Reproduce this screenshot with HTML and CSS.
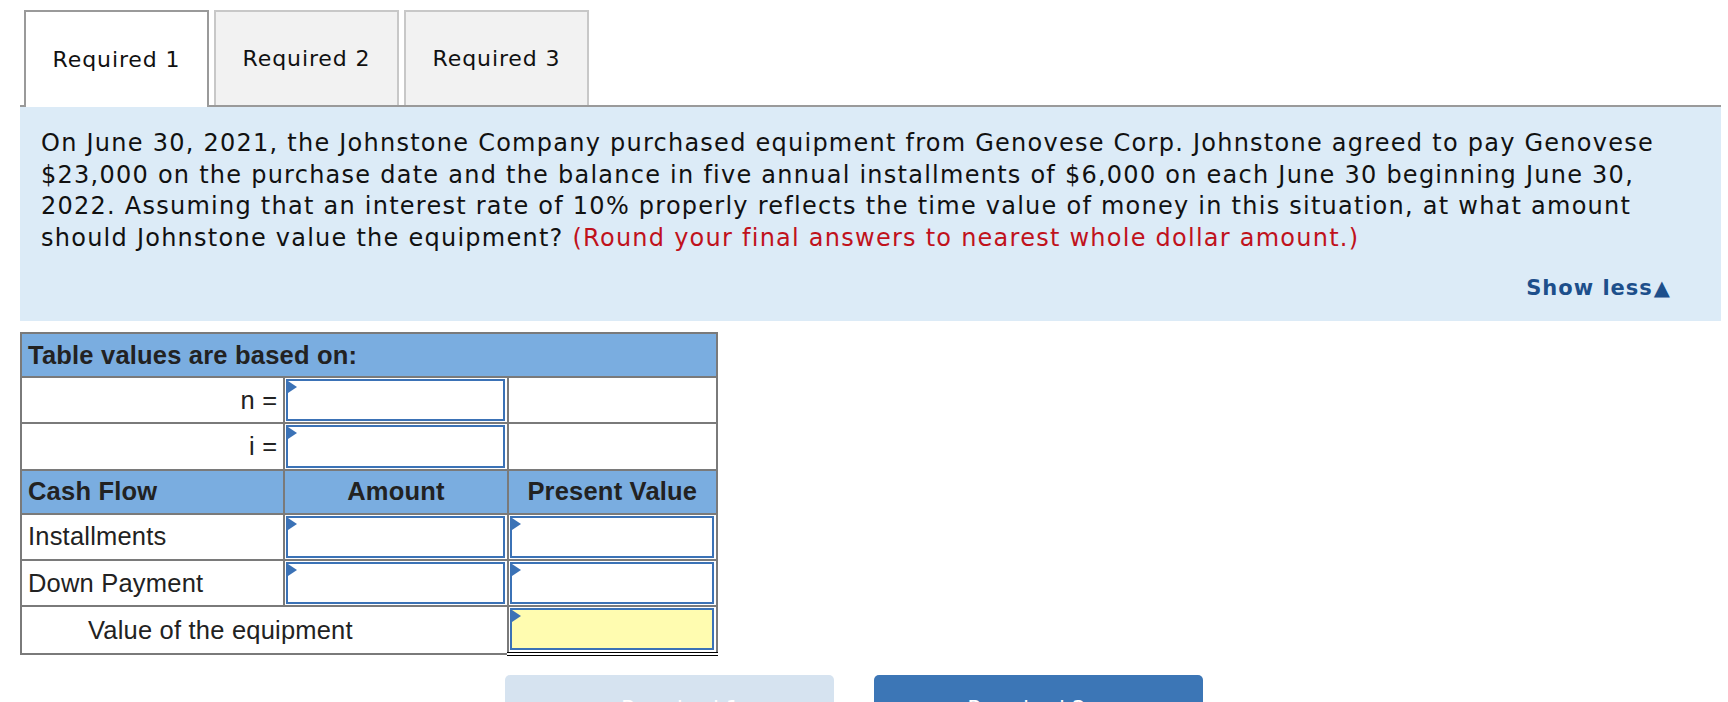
FILE: index.html
```html
<!DOCTYPE html>
<html lang="en">
<head>
  <meta charset="UTF-8">
  <title>Required 1</title>
  <link rel="stylesheet" href="styles.css">
</head>
<body>
  <div class="pagina">
    <div class="tabs">
      <div class="tab activa">Required 1</div>
      <div class="tab">Required 2</div>
      <div class="tab">Required 3</div>
    </div>

    <!-- enunciado -->
    <div class="enunciado">
      <p>On June 30, 2021, the Johnstone Company purchased equipment from Genovese Corp. Johnstone agreed to pay Genovese $23,000 on the purchase date and the balance in five annual installments of $6,000 on each June 30 beginning June 30, 2022. Assuming that an interest rate of 10% properly reflects the time value of money in this situation, at what amount should Johnstone value the equipment? <span class="nota">(Round your final answers to nearest whole dollar amount.)</span></p>
      <div class="mostrar">Show less<span class="flecha">&#9650;</span></div>
    </div>

    <!-- tabla de valores -->
    <table class="tabla">
      <colgroup>
        <col class="c1"><col class="c2"><col class="c3">
      </colgroup>
      <tr class="cabecera">
        <td colspan="3">Table values are based on:</td>
      </tr>
      <tr>
        <td class="etiqueta">n =</td>
        <td class="celda-input"><div class="campo"></div></td>
        <td></td>
      </tr>
      <tr>
        <td class="etiqueta">i =</td>
        <td class="celda-input"><div class="campo"></div></td>
        <td></td>
      </tr>
      <tr class="cabecera">
        <td>Cash Flow</td>
        <td class="centro">Amount</td>
        <td class="centro">Present Value</td>
      </tr>
      <tr>
        <td>Installments</td>
        <td class="celda-input"><div class="campo"></div></td>
        <td class="celda-input"><div class="campo"></div></td>
      </tr>
      <tr>
        <td>Down Payment</td>
        <td class="celda-input"><div class="campo"></div></td>
        <td class="celda-input"><div class="campo"></div></td>
      </tr>
      <tr>
        <td colspan="2" class="total">Value of the equipment</td>
        <td class="celda-input celda-total"><div class="campo amarillo"></div></td>
      </tr>
    </table>

    <div class="navegacion">
      <button class="nav-btn desactivado">&#8249;&nbsp; Required 1</button>
      <button class="nav-btn">Required 2 &nbsp;&#8250;</button>
    </div>
  </div>
</body>
</html>
```

FILE: styles.css
```css
body {
  margin: 0;
  background: white;
  font-family: "DejaVu Sans", Verdana, sans-serif;
  color: #111;
  overflow: hidden;
}

.pagina {
  padding: 10px 7px 0 20px;
}

.tabs {
  display: flex;
  gap: 5px;
  padding-left: 4px;
  border-bottom: 2px solid #9a9a9a;
}

.tab {
  width: 181px;
  height: 93px;
  display: flex;
  align-items: center;
  justify-content: center;
  background-color: #f2f2f2;
  border: 2px solid #c8c8c8;
  border-bottom: none;
  font-size: 22px;
  color: #111;
  letter-spacing: 0.9px;
}

.tab.activa {
  background-color: white;
  border-color: #9a9a9a;
  margin-bottom: -2px;
  height: 95px;
}

.enunciado {
  background-color: #dcebf7;
  padding: 21px 21px 15px 21px;
  height: 178px;
}

.enunciado p {
  margin: 0;
  font-size: 24px;
  line-height: 31.5px;
  letter-spacing: 1.25px;
  color: #111;
}

.nota {
  color: #c0121c;
}

.mostrar {
  text-align: right;
  margin-top: 22px;
  padding-right: 29px;
  font-size: 21px;
  font-weight: bold;
  letter-spacing: 1px;
  color: #1d4f8b;
}

.flecha {
  font-size: 21px;
  margin-left: 1px;
}

.tabla {
  margin-top: 11px;
  border-collapse: collapse;
  width: 698px;
  font-family: "Liberation Sans", Arial, sans-serif;
  font-size: 25.5px;
  color: #222;
  letter-spacing: 0.2px;
}

.c1 { width: 264px; }
.c2 { width: 224px; }
.c3 { width: 210px; }

.tabla td {
  border: 2px solid #7a7a7a;
  height: 42.2px;
  padding: 0 6px;
}

.cabecera td {
  background-color: #7aade0;
  font-weight: bold;
}

.etiqueta {
  text-align: right;
}

.centro {
  text-align: center;
}

.total {
  padding-left: 66px !important;
}

.tabla td.celda-input {
  padding: 1px 2px 1px 1px;
}

.campo {
  position: relative;
  height: 38.2px;
  border: 2px solid #3b72b6;
  background-color: white;
}

/* marca azul de la esquina */
.campo::before {
  content: "";
  position: absolute;
  top: 0;
  left: 0;
  width: 0;
  height: 0;
  border-top: 6px solid transparent;
  border-bottom: 6px solid transparent;
  border-left: 9px solid #3b72b6;
}

.amarillo {
  background-color: #fffcb0;
}

.tabla td.celda-total {
  border-top: 2px solid #000;
  border-bottom: 4px double #000;
  padding-bottom: 2px;
}

.navegacion {
  display: flex;
  justify-content: center;
  gap: 40px;
  margin-top: 19px;
  padding-right: 34px;
}

.nav-btn {
  width: 329px;
  height: 60px;
  border: none;
  border-radius: 5px;
  background-color: #3c76b6;
  color: white;
  font-family: "DejaVu Sans", Verdana, sans-serif;
  font-size: 22px;
  padding-top: 8px;
  cursor: pointer;
}

.nav-btn.desactivado {
  background-color: #d6e3f0;
}
```
